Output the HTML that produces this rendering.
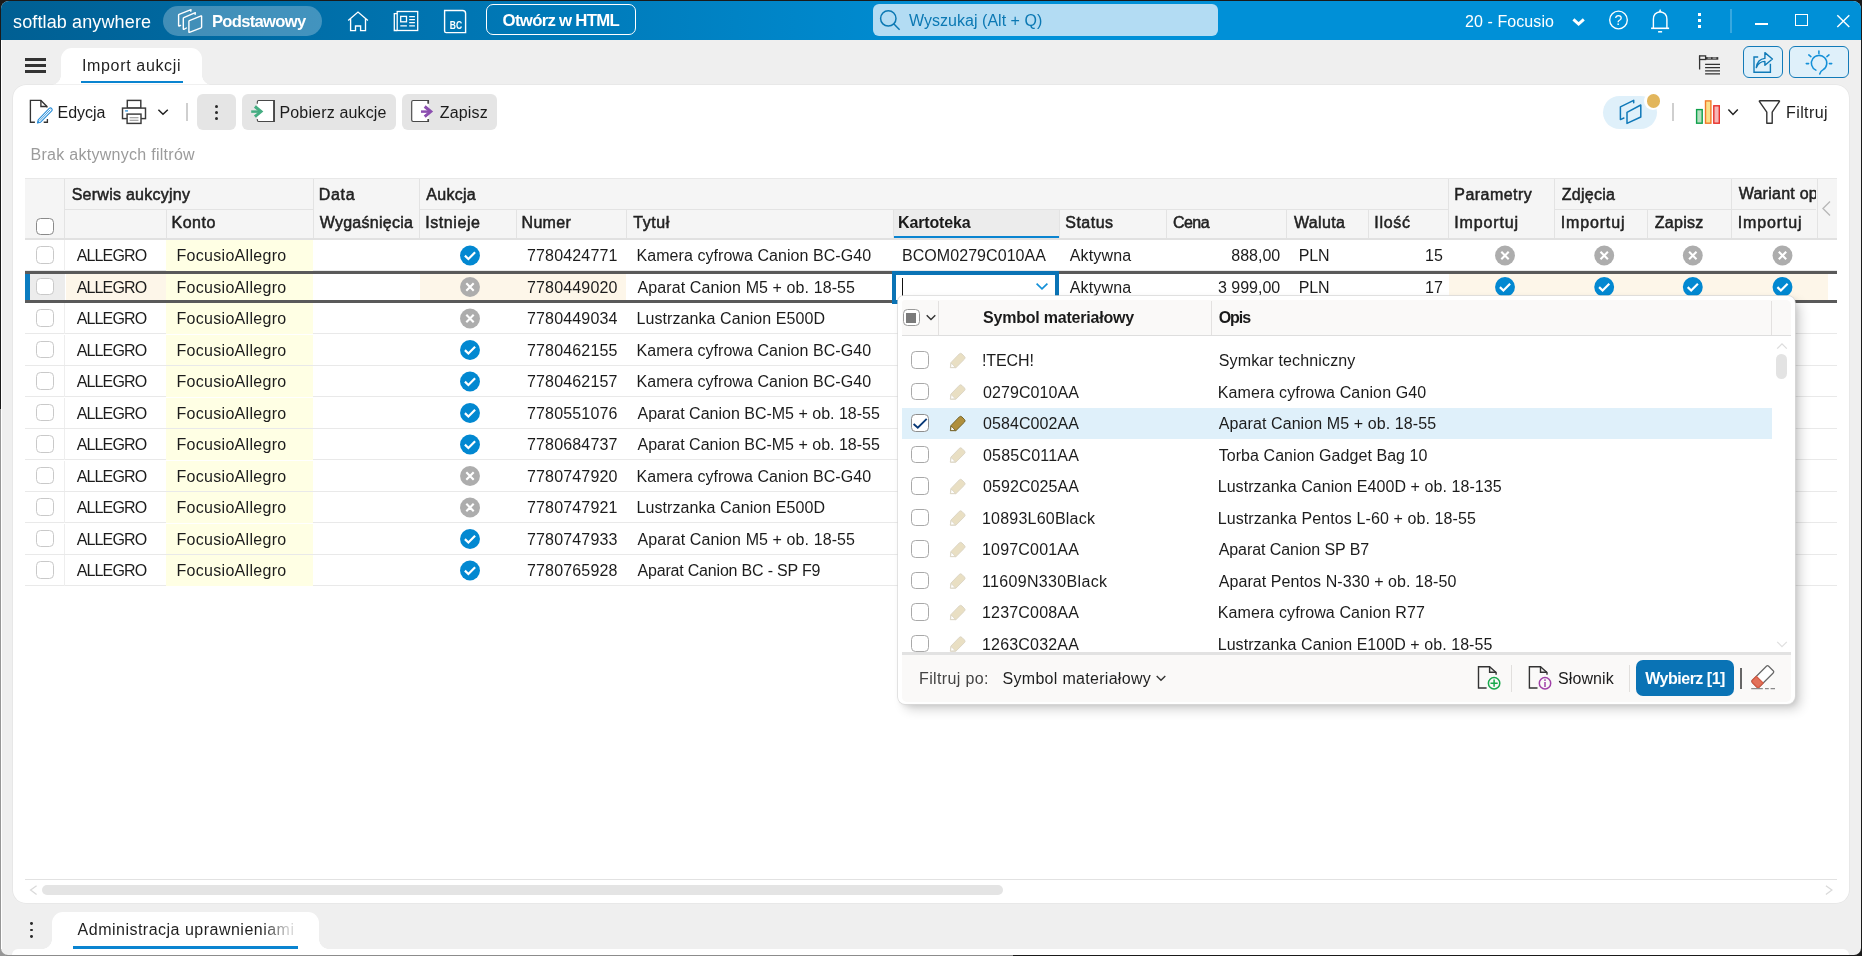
<!DOCTYPE html>
<html lang="pl"><head><meta charset="utf-8"><title>Import aukcji</title>
<style>
html,body{margin:0;padding:0;}
body{width:1862px;height:956px;overflow:hidden;background:linear-gradient(#969696,#969696) 0 409px/6px 560px no-repeat,linear-gradient(#8c8c8c,#8c8c8c) 0 944px/1013px 20px no-repeat,#1a1a1a;font-family:'Liberation Sans', sans-serif;position:relative;}
#win{position:absolute;left:0;top:0;width:1862px;height:956px;overflow:hidden;will-change:transform;}
#win div,#win span.t,#win svg{position:absolute;}
#win div{box-sizing:border-box;}
span.t{white-space:nowrap;line-height:20px;}
</style></head>
<body>
<div id="win">
<div style="left:1px;top:1px;width:1859.5px;height:954px;background:#efefef;border-radius:8px 8px 7px 7px;"></div>
<div style="left:1px;top:1px;width:1859.5px;height:39px;border-radius:8px 8px 0 0;background:linear-gradient(90deg,#005f93 0px,#0090d7 1000px,#0090d7 100%);"></div>
<span id="t1" class="t" style="left:13.00px;top:11.76px;font-size:18px;font-weight:400;color:#fff;letter-spacing:0.13px;">softlab anywhere</span>
<div style="left:163px;top:6px;width:159px;height:29.5px;border-radius:15px;background:rgba(255,255,255,0.26);"></div>
<span id="t2" class="t" style="left:212.00px;top:12.15px;font-size:16.6px;font-weight:700;color:#fff;letter-spacing:-0.70px;">Podstawowy</span>
<div style="left:485.8px;top:4.3px;width:149.8px;height:30.8px;border:1.8px solid #fff;border-radius:7px;"></div>
<span id="t3" class="t" style="left:502.60px;top:10.78px;font-size:16.8px;font-weight:700;color:#fff;letter-spacing:-0.72px;">Otwórz w HTML</span>
<div style="left:873px;top:4px;width:345px;height:31.5px;border-radius:6px;background:#b3dcf3;"></div>
<span id="t4" class="t" style="left:909.00px;top:11.26px;font-size:16px;font-weight:400;color:#0b78b3;letter-spacing:0.03px;">Wyszukaj (Alt + Q)</span>
<span id="t5" class="t" style="left:1465.00px;top:12.46px;font-size:16px;font-weight:400;color:#fff;letter-spacing:0.08px;">20 - Focusio</span>
<div style="left:1729.5px;top:8.8px;width:2px;height:24px;background:rgba(255,255,255,0.22);"></div>
<div style="left:61px;top:47.5px;width:141px;height:40px;background:#fff;border-radius:11px 11px 0 0;"></div>
<div style="left:51px;top:75px;width:10px;height:10px;background:radial-gradient(circle at 0 0,rgba(255,255,255,0) 9.6px,#fff 10.2px);"></div>
<div style="left:202px;top:75px;width:10px;height:10px;background:radial-gradient(circle at 100% 0,rgba(255,255,255,0) 9.6px,#fff 10.2px);"></div>
<span id="t6" class="t" style="left:82.00px;top:56.46px;font-size:16px;font-weight:400;color:#1f1f1f;letter-spacing:0.65px;">Import aukcji</span>
<div style="left:80.7px;top:80.7px;width:102px;height:2.8px;background:#0a84d0;"></div>
<div style="left:25px;top:58.3px;width:21px;height:2.5px;background:#333;"></div>
<div style="left:25px;top:64.2px;width:21px;height:2.5px;background:#333;"></div>
<div style="left:25px;top:70.1px;width:21px;height:2.5px;background:#333;"></div>
<div style="left:1742.7px;top:46.2px;width:40px;height:32.3px;border:1.7px solid #127ab8;border-radius:6px;background:#dff0fa;"></div>
<div style="left:1789.2px;top:46.2px;width:59.8px;height:32.3px;border:1.7px solid #127ab8;border-radius:6px;background:#dff0fa;"></div>
<div style="left:13px;top:85px;width:1836px;height:818px;background:#fff;border-radius:13px;box-shadow:0 0 0 0.6px #e2e2e2;"></div>
<span id="t7" class="t" style="left:57.50px;top:103.06px;font-size:16px;font-weight:400;color:#1c1c1c;letter-spacing:-0.03px;">Edycja</span>
<div style="left:186.4px;top:103px;width:1.5px;height:18px;background:#cfcfcf;"></div>
<div style="left:197px;top:94.2px;width:38.7px;height:36px;background:#e5e5e5;border-radius:6px;"></div>
<div style="left:214.6px;top:105px;width:3px;height:3px;background:#2a2a2a;border-radius:50%;"></div>
<div style="left:214.6px;top:110.9px;width:3px;height:3px;background:#2a2a2a;border-radius:50%;"></div>
<div style="left:214.6px;top:116.8px;width:3px;height:3px;background:#2a2a2a;border-radius:50%;"></div>
<div style="left:242px;top:94.2px;width:154px;height:36px;background:#e5e5e5;border-radius:6px;"></div>
<span id="t8" class="t" style="left:279.50px;top:103.06px;font-size:16px;font-weight:400;color:#1c1c1c;letter-spacing:0.15px;">Pobierz aukcje</span>
<div style="left:402px;top:94.2px;width:95px;height:36px;background:#e5e5e5;border-radius:6px;"></div>
<span id="t9" class="t" style="left:439.70px;top:103.06px;font-size:16px;font-weight:400;color:#1c1c1c;letter-spacing:0.17px;">Zapisz</span>
<div style="left:1603px;top:96px;width:54px;height:32.7px;background:#dff0fa;border-radius:17px;"></div>
<div style="left:1644.4px;top:92px;width:18px;height:18px;background:#fff;border-radius:50%;"></div>
<div style="left:1646.6px;top:94.2px;width:13.6px;height:13.6px;background:#e2b65c;border-radius:50%;"></div>
<div style="left:1672.3px;top:103.2px;width:1.5px;height:17.8px;background:#cfcfcf;"></div>
<span id="t10" class="t" style="left:1786.00px;top:103.06px;font-size:16px;font-weight:400;color:#1c1c1c;letter-spacing:0.41px;">Filtruj</span>
<span id="t11" class="t" style="left:30.50px;top:145.26px;font-size:16px;font-weight:400;color:#9b9b9b;letter-spacing:0.28px;">Brak aktywnych filtrów</span>
<div style="left:25px;top:178px;width:1812px;height:62px;background:#f5f5f5;border-top:1px solid #e8e8e8;border-bottom:2px solid #e1e1e1;"></div>
<div style="left:893.3px;top:210px;width:166px;height:28.4px;background:#ececec;"></div>
<div style="left:893.3px;top:235.8px;width:166px;height:2.6px;background:#0a84d0;"></div>
<div style="left:64.3px;top:179px;width:1px;height:59px;background:#e3e3e3;"></div>
<div style="left:312.6px;top:179px;width:1px;height:59px;background:#e3e3e3;"></div>
<div style="left:419.4px;top:179px;width:1px;height:59px;background:#e3e3e3;"></div>
<div style="left:1448.3px;top:179px;width:1px;height:59px;background:#e3e3e3;"></div>
<div style="left:1554.4px;top:179px;width:1px;height:59px;background:#e3e3e3;"></div>
<div style="left:1731.3px;top:179px;width:1px;height:59px;background:#e3e3e3;"></div>
<div style="left:1816.5px;top:179px;width:1px;height:59px;background:#e3e3e3;"></div>
<div style="left:165.5px;top:209.5px;width:1px;height:28.5px;background:#e3e3e3;"></div>
<div style="left:515.6px;top:209.5px;width:1px;height:28.5px;background:#e3e3e3;"></div>
<div style="left:626px;top:209.5px;width:1px;height:28.5px;background:#e3e3e3;"></div>
<div style="left:892.8px;top:209.5px;width:1px;height:28.5px;background:#e3e3e3;"></div>
<div style="left:1059.2px;top:209.5px;width:1px;height:28.5px;background:#e3e3e3;"></div>
<div style="left:1166.4px;top:209.5px;width:1px;height:28.5px;background:#e3e3e3;"></div>
<div style="left:1286.4px;top:209.5px;width:1px;height:28.5px;background:#e3e3e3;"></div>
<div style="left:1367.8px;top:209.5px;width:1px;height:28.5px;background:#e3e3e3;"></div>
<div style="left:1647.3px;top:209.5px;width:1px;height:28.5px;background:#e3e3e3;"></div>
<div style="left:64.3px;top:208.8px;width:248.3px;height:1px;background:#e3e3e3;"></div>
<div style="left:419.4px;top:208.8px;width:1028.9px;height:1px;background:#e3e3e3;"></div>
<div style="left:1554.4px;top:208.8px;width:262.0999999999999px;height:1px;background:#e3e3e3;"></div>
<span id="t12" class="t" style="left:71.70px;top:185.46px;font-size:16px;font-weight:400;color:#222;-webkit-text-stroke:0.5px #222;letter-spacing:0.26px;">Serwis aukcyjny</span>
<span id="t13" class="t" style="left:171.50px;top:213.46px;font-size:16px;font-weight:400;color:#222;-webkit-text-stroke:0.5px #222;letter-spacing:0.52px;">Konto</span>
<span id="t14" class="t" style="left:318.70px;top:185.46px;font-size:16px;font-weight:400;color:#222;-webkit-text-stroke:0.5px #222;letter-spacing:0.70px;">Data</span>
<span id="t15" class="t" style="left:319.70px;top:213.46px;font-size:16px;font-weight:400;color:#222;-webkit-text-stroke:0.5px #222;letter-spacing:0.26px;">Wygaśnięcia</span>
<span id="t16" class="t" style="left:426.30px;top:185.46px;font-size:16px;font-weight:400;color:#222;-webkit-text-stroke:0.5px #222;letter-spacing:0.28px;">Aukcja</span>
<span id="t17" class="t" style="left:425.30px;top:213.46px;font-size:16px;font-weight:400;color:#222;-webkit-text-stroke:0.5px #222;letter-spacing:0.56px;">Istnieje</span>
<span id="t18" class="t" style="left:521.50px;top:213.46px;font-size:16px;font-weight:400;color:#222;-webkit-text-stroke:0.5px #222;letter-spacing:0.33px;">Numer</span>
<span id="t19" class="t" style="left:633.30px;top:213.46px;font-size:16px;font-weight:400;color:#222;-webkit-text-stroke:0.5px #222;letter-spacing:0.54px;">Tytuł</span>
<span id="t20" class="t" style="left:898.00px;top:213.46px;font-size:16px;font-weight:700;color:#1a1a1a;letter-spacing:-0.14px;">Kartoteka</span>
<span id="t21" class="t" style="left:1065.30px;top:213.46px;font-size:16px;font-weight:400;color:#222;-webkit-text-stroke:0.5px #222;letter-spacing:0.47px;">Status</span>
<span id="t22" class="t" style="left:1173.00px;top:213.46px;font-size:16px;font-weight:400;color:#222;-webkit-text-stroke:0.5px #222;letter-spacing:-0.55px;">Cena</span>
<span id="t23" class="t" style="left:1294.00px;top:213.46px;font-size:16px;font-weight:400;color:#222;-webkit-text-stroke:0.5px #222;letter-spacing:0.34px;">Waluta</span>
<span id="t24" class="t" style="left:1374.30px;top:213.46px;font-size:16px;font-weight:400;color:#222;-webkit-text-stroke:0.5px #222;letter-spacing:0.70px;">Ilość</span>
<span id="t25" class="t" style="left:1454.30px;top:185.46px;font-size:16px;font-weight:400;color:#222;-webkit-text-stroke:0.5px #222;letter-spacing:0.45px;">Parametry</span>
<span id="t26" class="t" style="left:1454.30px;top:213.46px;font-size:16px;font-weight:400;color:#222;-webkit-text-stroke:0.5px #222;letter-spacing:0.85px;">Importuj</span>
<span id="t27" class="t" style="left:1561.70px;top:185.46px;font-size:16px;font-weight:400;color:#222;-webkit-text-stroke:0.5px #222;letter-spacing:0.27px;">Zdjęcia</span>
<span id="t28" class="t" style="left:1560.70px;top:213.46px;font-size:16px;font-weight:400;color:#222;-webkit-text-stroke:0.5px #222;letter-spacing:0.85px;">Importuj</span>
<span id="t29" class="t" style="left:1654.70px;top:213.46px;font-size:16px;font-weight:400;color:#222;-webkit-text-stroke:0.5px #222;letter-spacing:0.30px;">Zapisz</span>
<div style="left:1732.3px;top:180px;width:84px;height:28px;overflow:hidden;"><span class="t" style="left:6.4px;top:4.46px;font-size:16px;color:#222;-webkit-text-stroke:0.5px #222;letter-spacing:0.25px;">Wariant opisu</span></div>
<span id="t30" class="t" style="left:1737.70px;top:213.46px;font-size:16px;font-weight:400;color:#222;-webkit-text-stroke:0.5px #222;letter-spacing:0.85px;">Importuj</span>
<div style="left:36.3px;top:217.5px;width:17.5px;height:17.5px;border:1.5px solid #8a8a8a;border-radius:4.5px;background:#fff;"></div>
<div style="left:25px;top:270.1px;width:1812px;height:1px;background:#e9e9e9;"></div>
<div style="left:64.3px;top:240.0px;width:1px;height:30.5px;background:#eeeeee;"></div>
<div style="left:166px;top:240.0px;width:147px;height:30.5px;background:#ffffe4;"></div>
<div style="left:36.3px;top:246.3px;width:17.5px;height:17.5px;border:1.5px solid #c9c9c9;border-radius:4.5px;background:#fff;"></div>
<span id="t31" class="t" style="left:76.70px;top:246.36px;font-size:16px;font-weight:400;color:#1c1c1c;letter-spacing:-0.86px;">ALLEGRO</span>
<span id="t32" class="t" style="left:176.50px;top:246.36px;font-size:16px;font-weight:400;color:#1c1c1c;letter-spacing:0.30px;">FocusioAllegro</span>
<svg style="left:460px;top:245px;" width="20" height="21" viewBox="0 0 20 21"><g transform="translate(0.0 0.5)"><circle cx="10" cy="10" r="9.95" fill="#0288d1"/><path d="M4.9 10.1 L8.4 13.5 L15.1 6.8" fill="none" stroke="#fff" stroke-width="2.2"/></g></svg>
<span id="t33" class="t" style="left:527.00px;top:246.36px;font-size:16px;font-weight:400;color:#1c1c1c;letter-spacing:0.16px;">7780424771</span>
<span id="t34" class="t" style="left:636.50px;top:246.36px;font-size:16px;font-weight:400;color:#1c1c1c;letter-spacing:0.06px;">Kamera cyfrowa Canion BC-G40</span>
<span id="t35" class="t" style="left:1069.70px;top:246.36px;font-size:16px;font-weight:400;color:#1c1c1c;letter-spacing:0.17px;">Aktywna</span>
<span id="t36" class="t" style="right:581.80px;top:246.36px;font-size:16px;font-weight:400;color:#1c1c1c;">888,00</span>
<span id="t37" class="t" style="left:1298.70px;top:246.36px;font-size:16px;font-weight:400;color:#1c1c1c;letter-spacing:-0.14px;">PLN</span>
<span id="t38" class="t" style="right:419.10px;top:246.36px;font-size:16px;font-weight:400;color:#1c1c1c;">15</span>
<svg style="left:1495px;top:245px;" width="20" height="21" viewBox="0 0 20 21"><g transform="translate(0.0 0.5)"><circle cx="10" cy="10" r="9.95" fill="#adadad"/><path d="M6.3 6.3 L13.7 13.7 M13.7 6.3 L6.3 13.7" fill="none" stroke="#fff" stroke-width="2.1"/></g></svg>
<svg style="left:1594px;top:245px;" width="21" height="21" viewBox="0 0 21 21"><g transform="translate(0.2 0.5)"><circle cx="10" cy="10" r="9.95" fill="#adadad"/><path d="M6.3 6.3 L13.7 13.7 M13.7 6.3 L6.3 13.7" fill="none" stroke="#fff" stroke-width="2.1"/></g></svg>
<svg style="left:1682px;top:245px;" width="21" height="21" viewBox="0 0 21 21"><g transform="translate(0.8 0.5)"><circle cx="10" cy="10" r="9.95" fill="#adadad"/><path d="M6.3 6.3 L13.7 13.7 M13.7 6.3 L6.3 13.7" fill="none" stroke="#fff" stroke-width="2.1"/></g></svg>
<svg style="left:1772px;top:245px;" width="21" height="21" viewBox="0 0 21 21"><g transform="translate(0.5 0.5)"><circle cx="10" cy="10" r="9.95" fill="#adadad"/><path d="M6.3 6.3 L13.7 13.7 M13.7 6.3 L6.3 13.7" fill="none" stroke="#fff" stroke-width="2.1"/></g></svg>
<div style="left:25px;top:301.6px;width:1812px;height:1px;background:#e9e9e9;"></div>
<div style="left:25px;top:271px;width:1812px;height:32px;background:#fff;"></div>
<div style="left:25px;top:274px;width:4.6px;height:26px;background:#0b7cc0;"></div>
<div style="left:29.6px;top:274px;width:35px;height:26px;background:#ececec;"></div>
<div style="left:65.5px;top:274px;width:100.5px;height:26px;background:#fdf6e9;"></div>
<div style="left:419.8px;top:274px;width:206.5px;height:26px;background:#fdf6e9;"></div>
<div style="left:1449px;top:274px;width:379.3px;height:26px;background:#fdf6e9;"></div>
<div style="left:166px;top:274px;width:147px;height:26px;background:#ffffe4;"></div>
<div style="left:36.3px;top:277.8px;width:17.5px;height:17.5px;border:1.5px solid #c9c9c9;border-radius:4.5px;background:#fff;"></div>
<span id="t39" class="t" style="left:76.70px;top:277.86px;font-size:16px;font-weight:400;color:#1c1c1c;letter-spacing:-0.86px;">ALLEGRO</span>
<span id="t40" class="t" style="left:176.50px;top:277.86px;font-size:16px;font-weight:400;color:#1c1c1c;letter-spacing:0.30px;">FocusioAllegro</span>
<svg style="left:460px;top:277px;" width="20" height="20" viewBox="0 0 20 20"><circle cx="10" cy="10" r="9.95" fill="#adadad"/><path d="M6.3 6.3 L13.7 13.7 M13.7 6.3 L6.3 13.7" fill="none" stroke="#fff" stroke-width="2.1"/></svg>
<span id="t41" class="t" style="left:527.00px;top:277.86px;font-size:16px;font-weight:400;color:#1c1c1c;letter-spacing:0.16px;">7780449020</span>
<span id="t42" class="t" style="left:637.50px;top:277.86px;font-size:16px;font-weight:400;color:#1c1c1c;letter-spacing:0.10px;">Aparat Canion M5 + ob. 18-55</span>
<span id="t43" class="t" style="left:1069.70px;top:277.86px;font-size:16px;font-weight:400;color:#1c1c1c;letter-spacing:0.17px;">Aktywna</span>
<span id="t44" class="t" style="right:581.80px;top:277.86px;font-size:16px;font-weight:400;color:#1c1c1c;">3 999,00</span>
<span id="t45" class="t" style="left:1298.70px;top:277.86px;font-size:16px;font-weight:400;color:#1c1c1c;letter-spacing:-0.14px;">PLN</span>
<span id="t46" class="t" style="right:419.10px;top:277.86px;font-size:16px;font-weight:400;color:#1c1c1c;">17</span>
<svg style="left:1495px;top:277px;" width="20" height="20" viewBox="0 0 20 20"><circle cx="10" cy="10" r="9.95" fill="#0288d1"/><path d="M4.9 10.1 L8.4 13.5 L15.1 6.8" fill="none" stroke="#fff" stroke-width="2.2"/></svg>
<svg style="left:1594px;top:277px;" width="21" height="20" viewBox="0 0 21 20"><g transform="translate(0.2 0.0)"><circle cx="10" cy="10" r="9.95" fill="#0288d1"/><path d="M4.9 10.1 L8.4 13.5 L15.1 6.8" fill="none" stroke="#fff" stroke-width="2.2"/></g></svg>
<svg style="left:1682px;top:277px;" width="21" height="20" viewBox="0 0 21 20"><g transform="translate(0.8 0.0)"><circle cx="10" cy="10" r="9.95" fill="#0288d1"/><path d="M4.9 10.1 L8.4 13.5 L15.1 6.8" fill="none" stroke="#fff" stroke-width="2.2"/></g></svg>
<svg style="left:1772px;top:277px;" width="21" height="20" viewBox="0 0 21 20"><g transform="translate(0.5 0.0)"><circle cx="10" cy="10" r="9.95" fill="#0288d1"/><path d="M4.9 10.1 L8.4 13.5 L15.1 6.8" fill="none" stroke="#fff" stroke-width="2.2"/></g></svg>
<div style="left:25px;top:333.1px;width:1812px;height:1px;background:#e9e9e9;"></div>
<div style="left:64.3px;top:303.0px;width:1px;height:30.5px;background:#eeeeee;"></div>
<div style="left:166px;top:303.0px;width:147px;height:30.5px;background:#ffffe4;"></div>
<div style="left:36.3px;top:309.3px;width:17.5px;height:17.5px;border:1.5px solid #c9c9c9;border-radius:4.5px;background:#fff;"></div>
<span id="t47" class="t" style="left:76.70px;top:309.36px;font-size:16px;font-weight:400;color:#1c1c1c;letter-spacing:-0.86px;">ALLEGRO</span>
<span id="t48" class="t" style="left:176.50px;top:309.36px;font-size:16px;font-weight:400;color:#1c1c1c;letter-spacing:0.30px;">FocusioAllegro</span>
<svg style="left:460px;top:308px;" width="20" height="21" viewBox="0 0 20 21"><g transform="translate(0.0 0.5)"><circle cx="10" cy="10" r="9.95" fill="#adadad"/><path d="M6.3 6.3 L13.7 13.7 M13.7 6.3 L6.3 13.7" fill="none" stroke="#fff" stroke-width="2.1"/></g></svg>
<span id="t49" class="t" style="left:527.00px;top:309.36px;font-size:16px;font-weight:400;color:#1c1c1c;letter-spacing:0.16px;">7780449034</span>
<span id="t50" class="t" style="left:636.50px;top:309.36px;font-size:16px;font-weight:400;color:#1c1c1c;letter-spacing:0.08px;">Lustrzanka Canion E500D</span>
<div style="left:25px;top:364.6px;width:1812px;height:1px;background:#e9e9e9;"></div>
<div style="left:64.3px;top:334.5px;width:1px;height:30.5px;background:#eeeeee;"></div>
<div style="left:166px;top:334.5px;width:147px;height:30.5px;background:#ffffe4;"></div>
<div style="left:36.3px;top:340.8px;width:17.5px;height:17.5px;border:1.5px solid #c9c9c9;border-radius:4.5px;background:#fff;"></div>
<span id="t51" class="t" style="left:76.70px;top:340.86px;font-size:16px;font-weight:400;color:#1c1c1c;letter-spacing:-0.86px;">ALLEGRO</span>
<span id="t52" class="t" style="left:176.50px;top:340.86px;font-size:16px;font-weight:400;color:#1c1c1c;letter-spacing:0.30px;">FocusioAllegro</span>
<svg style="left:460px;top:340px;" width="20" height="20" viewBox="0 0 20 20"><circle cx="10" cy="10" r="9.95" fill="#0288d1"/><path d="M4.9 10.1 L8.4 13.5 L15.1 6.8" fill="none" stroke="#fff" stroke-width="2.2"/></svg>
<span id="t53" class="t" style="left:527.00px;top:340.86px;font-size:16px;font-weight:400;color:#1c1c1c;letter-spacing:0.16px;">7780462155</span>
<span id="t54" class="t" style="left:636.50px;top:340.86px;font-size:16px;font-weight:400;color:#1c1c1c;letter-spacing:0.06px;">Kamera cyfrowa Canion BC-G40</span>
<div style="left:25px;top:396.1px;width:1812px;height:1px;background:#e9e9e9;"></div>
<div style="left:64.3px;top:366.0px;width:1px;height:30.5px;background:#eeeeee;"></div>
<div style="left:166px;top:366.0px;width:147px;height:30.5px;background:#ffffe4;"></div>
<div style="left:36.3px;top:372.3px;width:17.5px;height:17.5px;border:1.5px solid #c9c9c9;border-radius:4.5px;background:#fff;"></div>
<span id="t55" class="t" style="left:76.70px;top:372.36px;font-size:16px;font-weight:400;color:#1c1c1c;letter-spacing:-0.86px;">ALLEGRO</span>
<span id="t56" class="t" style="left:176.50px;top:372.36px;font-size:16px;font-weight:400;color:#1c1c1c;letter-spacing:0.30px;">FocusioAllegro</span>
<svg style="left:460px;top:371px;" width="20" height="21" viewBox="0 0 20 21"><g transform="translate(0.0 0.5)"><circle cx="10" cy="10" r="9.95" fill="#0288d1"/><path d="M4.9 10.1 L8.4 13.5 L15.1 6.8" fill="none" stroke="#fff" stroke-width="2.2"/></g></svg>
<span id="t57" class="t" style="left:527.00px;top:372.36px;font-size:16px;font-weight:400;color:#1c1c1c;letter-spacing:0.16px;">7780462157</span>
<span id="t58" class="t" style="left:636.50px;top:372.36px;font-size:16px;font-weight:400;color:#1c1c1c;letter-spacing:0.06px;">Kamera cyfrowa Canion BC-G40</span>
<div style="left:25px;top:427.6px;width:1812px;height:1px;background:#e9e9e9;"></div>
<div style="left:64.3px;top:397.5px;width:1px;height:30.5px;background:#eeeeee;"></div>
<div style="left:166px;top:397.5px;width:147px;height:30.5px;background:#ffffe4;"></div>
<div style="left:36.3px;top:403.8px;width:17.5px;height:17.5px;border:1.5px solid #c9c9c9;border-radius:4.5px;background:#fff;"></div>
<span id="t59" class="t" style="left:76.70px;top:403.86px;font-size:16px;font-weight:400;color:#1c1c1c;letter-spacing:-0.86px;">ALLEGRO</span>
<span id="t60" class="t" style="left:176.50px;top:403.86px;font-size:16px;font-weight:400;color:#1c1c1c;letter-spacing:0.30px;">FocusioAllegro</span>
<svg style="left:460px;top:403px;" width="20" height="20" viewBox="0 0 20 20"><circle cx="10" cy="10" r="9.95" fill="#0288d1"/><path d="M4.9 10.1 L8.4 13.5 L15.1 6.8" fill="none" stroke="#fff" stroke-width="2.2"/></svg>
<span id="t61" class="t" style="left:527.00px;top:403.86px;font-size:16px;font-weight:400;color:#1c1c1c;letter-spacing:0.16px;">7780551076</span>
<span id="t62" class="t" style="left:637.50px;top:403.86px;font-size:16px;font-weight:400;color:#1c1c1c;">Aparat Canion BC-M5 + ob. 18-55</span>
<div style="left:25px;top:459.1px;width:1812px;height:1px;background:#e9e9e9;"></div>
<div style="left:64.3px;top:429.0px;width:1px;height:30.5px;background:#eeeeee;"></div>
<div style="left:166px;top:429.0px;width:147px;height:30.5px;background:#ffffe4;"></div>
<div style="left:36.3px;top:435.3px;width:17.5px;height:17.5px;border:1.5px solid #c9c9c9;border-radius:4.5px;background:#fff;"></div>
<span id="t63" class="t" style="left:76.70px;top:435.36px;font-size:16px;font-weight:400;color:#1c1c1c;letter-spacing:-0.86px;">ALLEGRO</span>
<span id="t64" class="t" style="left:176.50px;top:435.36px;font-size:16px;font-weight:400;color:#1c1c1c;letter-spacing:0.30px;">FocusioAllegro</span>
<svg style="left:460px;top:434px;" width="20" height="21" viewBox="0 0 20 21"><g transform="translate(0.0 0.5)"><circle cx="10" cy="10" r="9.95" fill="#0288d1"/><path d="M4.9 10.1 L8.4 13.5 L15.1 6.8" fill="none" stroke="#fff" stroke-width="2.2"/></g></svg>
<span id="t65" class="t" style="left:527.00px;top:435.36px;font-size:16px;font-weight:400;color:#1c1c1c;letter-spacing:0.16px;">7780684737</span>
<span id="t66" class="t" style="left:637.50px;top:435.36px;font-size:16px;font-weight:400;color:#1c1c1c;">Aparat Canion BC-M5 + ob. 18-55</span>
<div style="left:25px;top:490.6px;width:1812px;height:1px;background:#e9e9e9;"></div>
<div style="left:64.3px;top:460.5px;width:1px;height:30.5px;background:#eeeeee;"></div>
<div style="left:166px;top:460.5px;width:147px;height:30.5px;background:#ffffe4;"></div>
<div style="left:36.3px;top:466.8px;width:17.5px;height:17.5px;border:1.5px solid #c9c9c9;border-radius:4.5px;background:#fff;"></div>
<span id="t67" class="t" style="left:76.70px;top:466.86px;font-size:16px;font-weight:400;color:#1c1c1c;letter-spacing:-0.86px;">ALLEGRO</span>
<span id="t68" class="t" style="left:176.50px;top:466.86px;font-size:16px;font-weight:400;color:#1c1c1c;letter-spacing:0.30px;">FocusioAllegro</span>
<svg style="left:460px;top:466px;" width="20" height="20" viewBox="0 0 20 20"><circle cx="10" cy="10" r="9.95" fill="#adadad"/><path d="M6.3 6.3 L13.7 13.7 M13.7 6.3 L6.3 13.7" fill="none" stroke="#fff" stroke-width="2.1"/></svg>
<span id="t69" class="t" style="left:527.00px;top:466.86px;font-size:16px;font-weight:400;color:#1c1c1c;letter-spacing:0.16px;">7780747920</span>
<span id="t70" class="t" style="left:636.50px;top:466.86px;font-size:16px;font-weight:400;color:#1c1c1c;letter-spacing:0.06px;">Kamera cyfrowa Canion BC-G40</span>
<div style="left:25px;top:522.1px;width:1812px;height:1px;background:#e9e9e9;"></div>
<div style="left:64.3px;top:492.0px;width:1px;height:30.5px;background:#eeeeee;"></div>
<div style="left:166px;top:492.0px;width:147px;height:30.5px;background:#ffffe4;"></div>
<div style="left:36.3px;top:498.3px;width:17.5px;height:17.5px;border:1.5px solid #c9c9c9;border-radius:4.5px;background:#fff;"></div>
<span id="t71" class="t" style="left:76.70px;top:498.36px;font-size:16px;font-weight:400;color:#1c1c1c;letter-spacing:-0.86px;">ALLEGRO</span>
<span id="t72" class="t" style="left:176.50px;top:498.36px;font-size:16px;font-weight:400;color:#1c1c1c;letter-spacing:0.30px;">FocusioAllegro</span>
<svg style="left:460px;top:497px;" width="20" height="21" viewBox="0 0 20 21"><g transform="translate(0.0 0.5)"><circle cx="10" cy="10" r="9.95" fill="#adadad"/><path d="M6.3 6.3 L13.7 13.7 M13.7 6.3 L6.3 13.7" fill="none" stroke="#fff" stroke-width="2.1"/></g></svg>
<span id="t73" class="t" style="left:527.00px;top:498.36px;font-size:16px;font-weight:400;color:#1c1c1c;letter-spacing:0.16px;">7780747921</span>
<span id="t74" class="t" style="left:636.50px;top:498.36px;font-size:16px;font-weight:400;color:#1c1c1c;letter-spacing:0.08px;">Lustrzanka Canion E500D</span>
<div style="left:25px;top:553.6px;width:1812px;height:1px;background:#e9e9e9;"></div>
<div style="left:64.3px;top:523.5px;width:1px;height:30.5px;background:#eeeeee;"></div>
<div style="left:166px;top:523.5px;width:147px;height:30.5px;background:#ffffe4;"></div>
<div style="left:36.3px;top:529.8px;width:17.5px;height:17.5px;border:1.5px solid #c9c9c9;border-radius:4.5px;background:#fff;"></div>
<span id="t75" class="t" style="left:76.70px;top:529.86px;font-size:16px;font-weight:400;color:#1c1c1c;letter-spacing:-0.86px;">ALLEGRO</span>
<span id="t76" class="t" style="left:176.50px;top:529.86px;font-size:16px;font-weight:400;color:#1c1c1c;letter-spacing:0.30px;">FocusioAllegro</span>
<svg style="left:460px;top:529px;" width="20" height="20" viewBox="0 0 20 20"><circle cx="10" cy="10" r="9.95" fill="#0288d1"/><path d="M4.9 10.1 L8.4 13.5 L15.1 6.8" fill="none" stroke="#fff" stroke-width="2.2"/></svg>
<span id="t77" class="t" style="left:527.00px;top:529.86px;font-size:16px;font-weight:400;color:#1c1c1c;letter-spacing:0.16px;">7780747933</span>
<span id="t78" class="t" style="left:637.50px;top:529.86px;font-size:16px;font-weight:400;color:#1c1c1c;letter-spacing:0.10px;">Aparat Canion M5 + ob. 18-55</span>
<div style="left:25px;top:585.1px;width:1812px;height:1px;background:#e9e9e9;"></div>
<div style="left:64.3px;top:555.0px;width:1px;height:30.5px;background:#eeeeee;"></div>
<div style="left:166px;top:555.0px;width:147px;height:30.5px;background:#ffffe4;"></div>
<div style="left:36.3px;top:561.3px;width:17.5px;height:17.5px;border:1.5px solid #c9c9c9;border-radius:4.5px;background:#fff;"></div>
<span id="t79" class="t" style="left:76.70px;top:561.36px;font-size:16px;font-weight:400;color:#1c1c1c;letter-spacing:-0.86px;">ALLEGRO</span>
<span id="t80" class="t" style="left:176.50px;top:561.36px;font-size:16px;font-weight:400;color:#1c1c1c;letter-spacing:0.30px;">FocusioAllegro</span>
<svg style="left:460px;top:560px;" width="20" height="21" viewBox="0 0 20 21"><g transform="translate(0.0 0.5)"><circle cx="10" cy="10" r="9.95" fill="#0288d1"/><path d="M4.9 10.1 L8.4 13.5 L15.1 6.8" fill="none" stroke="#fff" stroke-width="2.2"/></g></svg>
<span id="t81" class="t" style="left:527.00px;top:561.36px;font-size:16px;font-weight:400;color:#1c1c1c;letter-spacing:0.16px;">7780765928</span>
<span id="t82" class="t" style="left:637.50px;top:561.36px;font-size:16px;font-weight:400;color:#1c1c1c;letter-spacing:-0.19px;">Aparat Canion BC - SP F9</span>
<span id="t83" class="t" style="left:902.00px;top:246.36px;font-size:16px;font-weight:400;color:#1c1c1c;letter-spacing:0.06px;">BCOM0279C010AA</span>
<div style="left:25px;top:271px;width:1812px;height:3px;background:#5a5a5a;"></div>
<div style="left:25px;top:300px;width:1812px;height:3px;background:#5a5a5a;"></div>
<div style="left:892px;top:271px;width:167.3px;height:33px;border:4.6px solid #0a73b5;background:#fff;"></div>
<div style="left:902.3px;top:278px;width:1.2px;height:19px;background:#111;"></div>
<svg style="left:1035px;top:281px;" width="14" height="10" viewBox="0 0 14 10"><path d="M1.6 2.6 L7 7.9 L12.4 2.6" fill="none" stroke="#1490d8" stroke-width="1.7"/></svg>
<svg style="left:1821px;top:200px;" width="11" height="17" viewBox="0 0 11 17"><path d="M9 1.6 L2 8.5 L9 15.4" fill="none" stroke="#b9b9b9" stroke-width="1.4"/></svg>
<div style="left:25px;top:878.6px;width:1812px;height:1.2px;background:#e2e2e2;"></div>
<div style="left:42px;top:885.4px;width:961px;height:9.8px;background:#e4e4e4;border-radius:5px;"></div>
<svg style="left:29px;top:884px;" width="9" height="12" viewBox="0 0 9 12"><g transform="translate(0.0 0.5)"><path d="M7.6 1.2 L1.6 5.6 L7.6 10" fill="none" stroke="#dadada" stroke-width="1.3"/></g></svg>
<svg style="left:1824px;top:884px;" width="10" height="12" viewBox="0 0 10 12"><g transform="translate(0.5 0.5)"><path d="M1.4 1.2 L7.4 5.6 L1.4 10" fill="none" stroke="#dadada" stroke-width="1.3"/></g></svg>
<div style="left:897.5px;top:296px;width:897.2px;height:408px;background:#fff;border-radius:5px 7px 8px 7px;box-shadow:0 0 0 0.7px #d9d9d9, 6px 6px 12px -1px rgba(0,0,0,0.19), 2px 2px 5px rgba(0,0,0,0.08);"></div>
<div style="left:902px;top:299.7px;width:889.3px;height:36.3px;background:#faf9f8;border-bottom:1.2px solid #dedede;border-radius:3px 5px 0 0;"></div>
<div style="left:938px;top:300.5px;width:1px;height:34.5px;background:#e3e1e0;"></div>
<div style="left:1211px;top:300.5px;width:1px;height:34.5px;background:#e3e1e0;"></div>
<div style="left:1770.5px;top:300.5px;width:1px;height:34.5px;background:#e3e1e0;"></div>
<div style="left:902.5px;top:309.2px;width:17.3px;height:17.3px;border:1.4px solid #9a9a9a;border-radius:4.5px;background:#fff;"></div>
<div style="left:906.4px;top:313.1px;width:9.5px;height:9.5px;background:#7b7b7b;"></div>
<svg style="left:925px;top:313px;" width="12" height="9" viewBox="0 0 12 9"><g transform="translate(0.5 0.5)"><path d="M1.2 1.8 L5.5 6 L9.8 1.8" fill="none" stroke="#333" stroke-width="1.4"/></g></svg>
<span id="t84" class="t" style="left:983.00px;top:307.96px;font-size:16px;font-weight:700;color:#1a1a1a;letter-spacing:-0.21px;">Symbol materiałowy</span>
<span id="t85" class="t" style="left:1218.70px;top:307.96px;font-size:16px;font-weight:700;color:#1a1a1a;letter-spacing:-1.02px;">Opis</span>
<div style="left:902px;top:337px;width:889.3px;height:315px;overflow:hidden;">
<div style="left:9.3px;top:14.40px;width:17.5px;height:17.5px;border:1.4px solid #a9a9a9;border-radius:4.5px;background:#fff;"></div>
<svg style="left:47px;top:15px;" width="18" height="18" viewBox="0 0 18 18"><g transform="translate(0.3 0.1)"><path d="M1 15.6 L1.7 10.4 L10 1.8 Q11.3 0.6 12.6 1.8 L15.2 4.4 Q16.4 5.7 15.2 7 L6.6 15.6 Z" fill="#e9dfc3" stroke="#d9d3c2" stroke-width="0.9" stroke-linejoin="round"/><path d="M1.2 15.4 L1.9 10.9 L6 15.2 Z" fill="#fff" stroke="#d9d3c2" stroke-width="0.8" stroke-linejoin="round"/></g></svg>
<span id="t86" class="t" style="left:80.00px;top:14.26px;font-size:16px;font-weight:400;color:#1c1c1c;letter-spacing:-0.10px;">!TECH!</span>
<span id="t87" class="t" style="left:316.70px;top:14.26px;font-size:16px;font-weight:400;color:#1c1c1c;letter-spacing:0.15px;">Symkar techniczny</span>
<div style="left:9.3px;top:45.90px;width:17.5px;height:17.5px;border:1.4px solid #a9a9a9;border-radius:4.5px;background:#fff;"></div>
<svg style="left:47px;top:46px;" width="18" height="18" viewBox="0 0 18 18"><g transform="translate(0.3 0.6)"><path d="M1 15.6 L1.7 10.4 L10 1.8 Q11.3 0.6 12.6 1.8 L15.2 4.4 Q16.4 5.7 15.2 7 L6.6 15.6 Z" fill="#e9dfc3" stroke="#d9d3c2" stroke-width="0.9" stroke-linejoin="round"/><path d="M1.2 15.4 L1.9 10.9 L6 15.2 Z" fill="#fff" stroke="#d9d3c2" stroke-width="0.8" stroke-linejoin="round"/></g></svg>
<span id="t88" class="t" style="left:81.00px;top:45.76px;font-size:16px;font-weight:400;color:#1c1c1c;letter-spacing:0.08px;">0279C010AA</span>
<span id="t89" class="t" style="left:315.70px;top:45.76px;font-size:16px;font-weight:400;color:#1c1c1c;letter-spacing:0.13px;">Kamera cyfrowa Canion G40</span>
<div style="left:0px;top:71.0px;width:869.7px;height:30.5px;background:#dff0fa;"></div>
<div style="left:9.3px;top:77.40px;width:17.5px;height:17.5px;border:1.4px solid #8d8d8d;border-radius:4.5px;background:#fff;"></div>
<svg style="left:9px;top:77px;" width="19" height="19" viewBox="0 0 19 19"><g transform="translate(0.3 0.4)"><path d="M2.3 9.6 L6.5 13.3 L15.4 4.5" fill="none" stroke="#0a3a78" stroke-width="1.9"/></g></svg>
<svg style="left:47px;top:78px;" width="18" height="18" viewBox="0 0 18 18"><g transform="translate(0.3 0.1)"><path d="M1 15.6 L1.7 10.4 L10 1.8 Q11.3 0.6 12.6 1.8 L15.2 4.4 Q16.4 5.7 15.2 7 L6.6 15.6 Z" fill="#b08f3c" stroke="#6b5a1e" stroke-width="0.9" stroke-linejoin="round"/><path d="M1.2 15.4 L1.9 10.9 L6 15.2 Z" fill="#fff" stroke="#6b5a1e" stroke-width="0.8" stroke-linejoin="round"/></g></svg>
<span id="t90" class="t" style="left:81.00px;top:77.26px;font-size:16px;font-weight:400;color:#1c1c1c;letter-spacing:0.08px;">0584C002AA</span>
<span id="t91" class="t" style="left:316.70px;top:77.26px;font-size:16px;font-weight:400;color:#1c1c1c;letter-spacing:0.10px;">Aparat Canion M5 + ob. 18-55</span>
<div style="left:9.3px;top:108.90px;width:17.5px;height:17.5px;border:1.4px solid #a9a9a9;border-radius:4.5px;background:#fff;"></div>
<svg style="left:47px;top:109px;" width="18" height="18" viewBox="0 0 18 18"><g transform="translate(0.3 0.6)"><path d="M1 15.6 L1.7 10.4 L10 1.8 Q11.3 0.6 12.6 1.8 L15.2 4.4 Q16.4 5.7 15.2 7 L6.6 15.6 Z" fill="#e9dfc3" stroke="#d9d3c2" stroke-width="0.9" stroke-linejoin="round"/><path d="M1.2 15.4 L1.9 10.9 L6 15.2 Z" fill="#fff" stroke="#d9d3c2" stroke-width="0.8" stroke-linejoin="round"/></g></svg>
<span id="t92" class="t" style="left:81.00px;top:108.76px;font-size:16px;font-weight:400;color:#1c1c1c;letter-spacing:0.21px;">0585C011AA</span>
<span id="t93" class="t" style="left:316.70px;top:108.76px;font-size:16px;font-weight:400;color:#1c1c1c;letter-spacing:0.06px;">Torba Canion Gadget Bag 10</span>
<div style="left:9.3px;top:140.40px;width:17.5px;height:17.5px;border:1.4px solid #a9a9a9;border-radius:4.5px;background:#fff;"></div>
<svg style="left:47px;top:141px;" width="18" height="18" viewBox="0 0 18 18"><g transform="translate(0.3 0.1)"><path d="M1 15.6 L1.7 10.4 L10 1.8 Q11.3 0.6 12.6 1.8 L15.2 4.4 Q16.4 5.7 15.2 7 L6.6 15.6 Z" fill="#e9dfc3" stroke="#d9d3c2" stroke-width="0.9" stroke-linejoin="round"/><path d="M1.2 15.4 L1.9 10.9 L6 15.2 Z" fill="#fff" stroke="#d9d3c2" stroke-width="0.8" stroke-linejoin="round"/></g></svg>
<span id="t94" class="t" style="left:81.00px;top:140.26px;font-size:16px;font-weight:400;color:#1c1c1c;letter-spacing:0.08px;">0592C025AA</span>
<span id="t95" class="t" style="left:315.70px;top:140.26px;font-size:16px;font-weight:400;color:#1c1c1c;letter-spacing:0.07px;">Lustrzanka Canion E400D + ob. 18-135</span>
<div style="left:9.3px;top:171.90px;width:17.5px;height:17.5px;border:1.4px solid #a9a9a9;border-radius:4.5px;background:#fff;"></div>
<svg style="left:47px;top:172px;" width="18" height="18" viewBox="0 0 18 18"><g transform="translate(0.3 0.6)"><path d="M1 15.6 L1.7 10.4 L10 1.8 Q11.3 0.6 12.6 1.8 L15.2 4.4 Q16.4 5.7 15.2 7 L6.6 15.6 Z" fill="#e9dfc3" stroke="#d9d3c2" stroke-width="0.9" stroke-linejoin="round"/><path d="M1.2 15.4 L1.9 10.9 L6 15.2 Z" fill="#fff" stroke="#d9d3c2" stroke-width="0.8" stroke-linejoin="round"/></g></svg>
<span id="t96" class="t" style="left:80.00px;top:171.76px;font-size:16px;font-weight:400;color:#1c1c1c;letter-spacing:0.22px;">10893L60Black</span>
<span id="t97" class="t" style="left:315.70px;top:171.76px;font-size:16px;font-weight:400;color:#1c1c1c;letter-spacing:0.10px;">Lustrzanka Pentos L-60 + ob. 18-55</span>
<div style="left:9.3px;top:203.40px;width:17.5px;height:17.5px;border:1.4px solid #a9a9a9;border-radius:4.5px;background:#fff;"></div>
<svg style="left:47px;top:204px;" width="18" height="18" viewBox="0 0 18 18"><g transform="translate(0.3 0.1)"><path d="M1 15.6 L1.7 10.4 L10 1.8 Q11.3 0.6 12.6 1.8 L15.2 4.4 Q16.4 5.7 15.2 7 L6.6 15.6 Z" fill="#e9dfc3" stroke="#d9d3c2" stroke-width="0.9" stroke-linejoin="round"/><path d="M1.2 15.4 L1.9 10.9 L6 15.2 Z" fill="#fff" stroke="#d9d3c2" stroke-width="0.8" stroke-linejoin="round"/></g></svg>
<span id="t98" class="t" style="left:80.00px;top:203.26px;font-size:16px;font-weight:400;color:#1c1c1c;letter-spacing:0.19px;">1097C001AA</span>
<span id="t99" class="t" style="left:316.70px;top:203.26px;font-size:16px;font-weight:400;color:#1c1c1c;letter-spacing:-0.07px;">Aparat Canion SP B7</span>
<div style="left:9.3px;top:234.90px;width:17.5px;height:17.5px;border:1.4px solid #a9a9a9;border-radius:4.5px;background:#fff;"></div>
<svg style="left:47px;top:235px;" width="18" height="18" viewBox="0 0 18 18"><g transform="translate(0.3 0.6)"><path d="M1 15.6 L1.7 10.4 L10 1.8 Q11.3 0.6 12.6 1.8 L15.2 4.4 Q16.4 5.7 15.2 7 L6.6 15.6 Z" fill="#e9dfc3" stroke="#d9d3c2" stroke-width="0.9" stroke-linejoin="round"/><path d="M1.2 15.4 L1.9 10.9 L6 15.2 Z" fill="#fff" stroke="#d9d3c2" stroke-width="0.8" stroke-linejoin="round"/></g></svg>
<span id="t100" class="t" style="left:80.00px;top:234.76px;font-size:16px;font-weight:400;color:#1c1c1c;letter-spacing:0.33px;">11609N330Black</span>
<span id="t101" class="t" style="left:316.70px;top:234.76px;font-size:16px;font-weight:400;color:#1c1c1c;letter-spacing:0.08px;">Aparat Pentos N-330 + ob. 18-50</span>
<div style="left:9.3px;top:266.40px;width:17.5px;height:17.5px;border:1.4px solid #a9a9a9;border-radius:4.5px;background:#fff;"></div>
<svg style="left:47px;top:267px;" width="18" height="18" viewBox="0 0 18 18"><g transform="translate(0.3 0.1)"><path d="M1 15.6 L1.7 10.4 L10 1.8 Q11.3 0.6 12.6 1.8 L15.2 4.4 Q16.4 5.7 15.2 7 L6.6 15.6 Z" fill="#e9dfc3" stroke="#d9d3c2" stroke-width="0.9" stroke-linejoin="round"/><path d="M1.2 15.4 L1.9 10.9 L6 15.2 Z" fill="#fff" stroke="#d9d3c2" stroke-width="0.8" stroke-linejoin="round"/></g></svg>
<span id="t102" class="t" style="left:80.00px;top:266.26px;font-size:16px;font-weight:400;color:#1c1c1c;letter-spacing:0.19px;">1237C008AA</span>
<span id="t103" class="t" style="left:315.70px;top:266.26px;font-size:16px;font-weight:400;color:#1c1c1c;letter-spacing:0.11px;">Kamera cyfrowa Canion R77</span>
<div style="left:9.3px;top:297.90px;width:17.5px;height:17.5px;border:1.4px solid #a9a9a9;border-radius:4.5px;background:#fff;"></div>
<svg style="left:47px;top:298px;" width="18" height="18" viewBox="0 0 18 18"><g transform="translate(0.3 0.6)"><path d="M1 15.6 L1.7 10.4 L10 1.8 Q11.3 0.6 12.6 1.8 L15.2 4.4 Q16.4 5.7 15.2 7 L6.6 15.6 Z" fill="#e9dfc3" stroke="#d9d3c2" stroke-width="0.9" stroke-linejoin="round"/><path d="M1.2 15.4 L1.9 10.9 L6 15.2 Z" fill="#fff" stroke="#d9d3c2" stroke-width="0.8" stroke-linejoin="round"/></g></svg>
<span id="t104" class="t" style="left:80.00px;top:297.76px;font-size:16px;font-weight:400;color:#1c1c1c;letter-spacing:0.19px;">1263C032AA</span>
<span id="t105" class="t" style="left:315.70px;top:297.76px;font-size:16px;font-weight:400;color:#1c1c1c;letter-spacing:0.06px;">Lustrzanka Canion E100D + ob. 18-55</span>
</div>
<svg style="left:1776px;top:342px;" width="12" height="8" viewBox="0 0 12 8"><path d="M1.2 6.6 L6 1.8 L10.8 6.6" fill="none" stroke="#dcdcdc" stroke-width="1.3"/></svg>
<div style="left:1776.3px;top:354.2px;width:11px;height:25px;background:#e3e3e3;border-radius:5.5px;"></div>
<svg style="left:1776px;top:640px;" width="12" height="9" viewBox="0 0 12 9"><g transform="translate(0 0.5)"><path d="M1.2 1.4 L6 6.2 L10.8 1.4" fill="none" stroke="#e0e0e0" stroke-width="1.3"/></g></svg>
<div style="left:902px;top:652px;width:889.3px;height:2.6px;background:#e2e2e2;"></div>
<div style="left:902px;top:654.6px;width:889.3px;height:47.2px;background:#faf9f8;border-radius:0 0 5px 5px;"></div>
<span id="t106" class="t" style="left:919.00px;top:668.96px;font-size:16px;font-weight:400;color:#444;letter-spacing:0.36px;">Filtruj po:</span>
<span id="t107" class="t" style="left:1002.50px;top:668.96px;font-size:16px;font-weight:400;color:#1f1f1f;letter-spacing:0.30px;">Symbol materiałowy</span>
<svg style="left:1155px;top:674px;" width="12" height="9" viewBox="0 0 12 9"><g transform="translate(0.5 0.3)"><path d="M1.2 1.8 L5.5 6 L9.8 1.8" fill="none" stroke="#333" stroke-width="1.4"/></g></svg>
<div style="left:1511.2px;top:665.3px;width:1.2px;height:26.5px;background:#e1dfdd;"></div>
<span id="t108" class="t" style="left:1558.00px;top:668.96px;font-size:16px;font-weight:400;color:#1c1c1c;letter-spacing:0.09px;">Słownik</span>
<div style="left:1628.7px;top:665.3px;width:1.2px;height:26.5px;background:#e1dfdd;"></div>
<div style="left:1636.3px;top:660px;width:98px;height:36.2px;background:#0a73b5;border-radius:7px;"></div>
<span id="t109" class="t" style="left:1645.30px;top:668.96px;font-size:16px;font-weight:700;color:#fff;letter-spacing:-0.50px;">Wybierz [1]</span>
<div style="left:1740.4px;top:668.3px;width:1.9px;height:20.5px;background:#666;"></div>
<div style="left:12px;top:949px;width:1837px;height:6px;background:#fff;border-radius:9px 9px 0 0;"></div>
<div style="left:52px;top:912px;width:267px;height:43px;background:#fff;border-radius:11px 11px 0 0;"></div>
<div style="left:42px;top:939px;width:10px;height:10px;background:radial-gradient(circle at 0 0,rgba(255,255,255,0) 9.6px,#fff 10.2px);"></div>
<div style="left:319px;top:939px;width:10px;height:10px;background:radial-gradient(circle at 100% 0,rgba(255,255,255,0) 9.6px,#fff 10.2px);"></div>
<span id="t110" class="t" style="left:77.60px;top:920.26px;font-size:16px;font-weight:400;color:#1f1f1f;letter-spacing:0.49px;">Administracja uprawnieniami</span>
<div style="left:262px;top:918px;width:36px;height:24px;background:linear-gradient(90deg,rgba(255,255,255,0) 0,rgba(255,255,255,0.75) 70%,rgba(255,255,255,0.9) 100%);"></div>
<div style="left:73px;top:946px;width:225px;height:3px;background:#0a84d0;"></div>
<div style="left:30.2px;top:922.2px;width:2.8px;height:2.8px;background:#2a2a2a;border-radius:50%;"></div>
<div style="left:30.2px;top:928.5px;width:2.8px;height:2.8px;background:#2a2a2a;border-radius:50%;"></div>
<div style="left:30.2px;top:934.8px;width:2.8px;height:2.8px;background:#2a2a2a;border-radius:50%;"></div>
<svg style="left:176px;top:7px;" width="28" height="28" viewBox="0 0 28 28"><g fill="none" stroke="#fff" stroke-width="1.4" stroke-linejoin="round" stroke-linecap="round"><path d="M12.9 14.4 Q12.9 13.9 13.4 13.7 L25.1 8.95 Q25.6 8.75 25.6 9.3 L25.6 20.1 Q25.6 20.6 25.1 20.8 L13.4 25.3 Q12.9 25.5 12.9 25 Z"/><path d="M19.1 7.4 L19.3 5.6 L7.8 10.7 Q7.3 10.9 7.3 11.5 L7.3 22 Q7.3 22.6 7.9 22.3 L10.4 21"/><path d="M14.8 4.2 L15 2.6 L3.1 7.3 Q2.6 7.5 2.6 8.1 L2.6 18.6 Q2.6 19.2 3.2 19 L4.6 18.4"/></g></svg>
<svg style="left:346px;top:10px;" width="24" height="23" viewBox="0 0 24 23"><g fill="none" stroke="#fff" stroke-width="1.35" stroke-linejoin="miter"><path d="M2.2 10.5 L12 2.1 L21.9 10.5"/><path d="M4.6 8.8 L4.6 20.6 L9.5 20.6 L9.5 16 L14.6 16 L14.6 20.6 L19.5 20.6 L19.5 8.8"/></g></svg>
<svg style="left:393px;top:10px;" width="26" height="22" viewBox="0 0 26 22"><g fill="none" stroke="#fff" stroke-width="1.3"><rect x="4.2" y="1.5" width="20.5" height="19"/><path d="M4.2 3.6 L1.3 3.6 L1.3 20.5 L4.2 20.5"/><rect x="7.7" y="6.4" width="5.8" height="5.4"/><path d="M16.2 6.7 H21.9 M16.2 9.7 H21.9 M16.2 12.7 H21.9 M7.3 15.9 H13.9 M16.2 15.9 H21.9"/></g></svg>
<svg style="left:443px;top:9px;" width="24" height="25" viewBox="0 0 24 25"><path d="M1.6 1.5 H19.6 Q22.6 1.5 22.6 4.5 V23.6 H3.2 Q1.6 23.6 1.6 22 Z" fill="none" stroke="#fff" stroke-width="1.4"/><text x="6.8" y="19.5" font-family="Liberation Sans, sans-serif" font-size="10.4" font-weight="700" fill="#fff" textLength="12.3" lengthAdjust="spacingAndGlyphs">BC</text></svg>
<svg style="left:878px;top:8px;" width="24" height="24" viewBox="0 0 24 24"><g fill="none" stroke="#0b78b3" stroke-width="1.5"><circle cx="10.3" cy="10.4" r="7.7"/><path d="M15.9 16 L21.6 21.8"/></g></svg>
<svg style="left:1570px;top:15px;" width="18" height="13" viewBox="0 0 18 13"><path d="M3.4 4.3 L8.6 9 L13.8 4.3" fill="none" stroke="#fff" stroke-width="2.9"/></svg>
<svg style="left:1607px;top:9px;" width="23" height="23" viewBox="0 0 23 23"><circle cx="11.5" cy="11" r="8.8" fill="none" stroke="#fff" stroke-width="1.35"/><text x="11.5" y="16" text-anchor="middle" font-family="Liberation Sans, sans-serif" font-size="14" fill="#fff">?</text></svg>
<svg style="left:1649px;top:8px;" width="23" height="27" viewBox="0 0 23 27"><g fill="none" stroke="#fff" stroke-width="1.4"><path d="M4.4 20.1 V11.2 Q4.4 4.6 11.1 3.7 Q17.9 4.6 17.9 11.2 V20.1"/><path d="M2.1 20.3 H20.1" stroke-width="1.6"/><path d="M9.1 23.8 H13.1" stroke-width="1.5"/><path d="M10.3 3.9 L11.1 2.2 L11.9 3.9" stroke-width="1.2"/></g></svg>
<div style="left:1698.1px;top:13.3px;width:3px;height:3px;background:#fff;"></div>
<div style="left:1698.1px;top:19.3px;width:3px;height:3px;background:#fff;"></div>
<div style="left:1698.1px;top:25.2px;width:3px;height:3px;background:#fff;"></div>
<div style="left:1755px;top:23.4px;width:13px;height:1.4px;background:#fff;"></div>
<div style="left:1795px;top:13.7px;width:13px;height:12.4px;border:1.4px solid #fff;"></div>
<svg style="left:1835px;top:13px;" width="17" height="16" viewBox="0 0 17 16"><path d="M2.3 2.2 L14.3 14.1 M14.3 2.2 L2.3 14.1" fill="none" stroke="#fff" stroke-width="1.4"/></svg>
<svg style="left:1697px;top:53px;" width="26" height="24" viewBox="0 0 26 24"><g fill="none" stroke="#333" stroke-width="1.3"><path d="M2.6 2.6 V16.5"/><rect x="2.6" y="2.9" width="6" height="3.6" fill="#efefef"/><path d="M8.6 5.4 H21.3" stroke-width="2.6"/><path d="M10.6 5.1 H14 M15.6 5.1 H19.4" stroke="#efefef" stroke-width="0.8"/><path d="M8.1 11.4 H23 M8.1 14.6 H23 M8.1 17.8 H23 M8.1 20.8 H23" stroke-width="1.35"/></g></svg>
<svg style="left:1750px;top:49px;" width="26" height="26" viewBox="0 0 26 26"><g fill="none" stroke="#0f7ab8" stroke-width="1.4" stroke-linejoin="miter"><path d="M8.2 8 H4 V23.3 H20.4 V14.8"/><path d="M6.3 18.6 Q7.4 10.1 14.9 9.4 V3.6 L22.4 10 L14.9 16.3 V12.4 Q9 12.4 6.3 18.6 Z" stroke-linejoin="round"/></g></svg>
<svg style="left:1803px;top:48px;" width="32" height="30" viewBox="0 0 32 30"><g fill="none" stroke="#1490d8" stroke-width="1.55" stroke-linecap="round"><path d="M12.9 22.1 A7.7 7.7 0 1 1 20.2 21.6 Q17.6 23 16.7 26"/><path d="M15.9 2.9 V5.6 M3.3 15.6 H5.6 M26.4 15.6 H28.7 M5.8 6.9 L7.9 8.6 M26 6.9 L23.9 8.6"/></g></svg>
<svg style="left:28px;top:98px;" width="26" height="28" viewBox="0 0 26 28"><g fill="none" stroke="#333" stroke-width="1.35"><path d="M6.9 24.2 H2.4 V2.4 H12.9 L19 8.5 V9.6"/><path d="M12.9 2.4 V8.5 H19"/><path d="M15.7 24.2 H19.4 V21"/></g><path d="M9.5 25 L10.2 21.8 L21.2 10.4 Q22.4 9.4 23.4 10.3 L23.9 10.8 Q24.7 11.8 23.7 12.8 L12.6 24.2 Z" fill="#fff" stroke="#2b8fd9" stroke-width="1.15" stroke-linejoin="round"/><path d="M11.6 22.8 L22.3 11.7" stroke="#2b8fd9" stroke-width="0.9" fill="none"/><path d="M9.3 25.2 L10.1 22.6 L11.9 24.4 Z" fill="#2b8fd9"/></svg>
<svg style="left:120px;top:98px;" width="28" height="28" viewBox="0 0 28 28"><g fill="#fff" stroke="#3a3a3a" stroke-width="1.45"><rect x="7.3" y="2.4" width="13.5" height="7.7"/><rect x="2.5" y="10.1" width="23" height="10.5"/><rect x="7.1" y="16.1" width="13.9" height="9.3"/></g><path d="M9.6 19.8 H18.5 M9.6 22.2 H18.5" stroke="#8a8a8a" stroke-width="1.1"/><path d="M5.1 12.9 H8" stroke="#2b8fd9" stroke-width="1.3"/></svg>
<svg style="left:156px;top:106px;" width="14" height="11" viewBox="0 0 14 11"><path d="M2.4 3.7 L7 8.3 L11.8 3.7" fill="none" stroke="#222" stroke-width="1.5"/></svg>
<svg style="left:250px;top:99px;" width="26" height="24" viewBox="0 0 26 24"><rect x="7.3" y="1.5" width="17" height="21" rx="1.4" fill="#fff"/><path d="M7.3 4.7 V2.9 Q7.3 1.5 8.7 1.5 H24.3 V22.5 H8.7 Q7.3 22.5 7.3 21.1 V20" fill="none" stroke="#484848" stroke-width="1.1"/><path d="M23.95 1.2 V22.8" stroke="#444" stroke-width="1.7"/><path d="M1.2 12.6 H11.0" stroke="#45ad82" stroke-width="2.5" fill="none"/><path d="M4.9 7.5 L11.0 12.6 L4.9 17.7" stroke="#45ad82" stroke-width="3" fill="none" stroke-linejoin="miter"/></svg>
<svg style="left:410px;top:99px;" width="27" height="24" viewBox="0 0 27 24"><rect x="1.7" y="1.5" width="16.9" height="21" rx="1.4" fill="#fff"/><path d="M18.2 1.5 H3.1 Q1.7 1.5 1.7 2.9 V21.1 Q1.7 22.5 3.1 22.5 H18.2" fill="none" stroke="#484848" stroke-width="1.15"/><path d="M18.2 1.1 V4.7 M18.2 20 V22.9" stroke="#444" stroke-width="1.7"/><path d="M11 12.6 H20.8" stroke="#8c4fb0" stroke-width="2.5" fill="none"/><path d="M14.7 7.5 L20.8 12.6 L14.7 17.7" stroke="#8c4fb0" stroke-width="3" fill="none" stroke-linejoin="miter"/></svg>
<svg style="left:1617px;top:98px;" width="26" height="28" viewBox="0 0 26 28"><g fill="none" stroke="#0f78b8" stroke-width="1.5" stroke-linejoin="round" stroke-linecap="round"><path d="M10 14.3 L23.8 7 V19 L10 25.4 Z"/><path d="M16.7 4.7 V2.3 L3.4 8.9 V21.6 L6.9 20"/></g></svg>
<svg style="left:1694px;top:98px;" width="28" height="28" viewBox="0 0 28 28"><rect x="2.6" y="11.6" width="5.6" height="13.6" fill="#b6dfc0" stroke="#0ea04b" stroke-width="1.4"/><rect x="11.5" y="2.9" width="5.4" height="22.3" fill="#fbe08a" stroke="#f07a28" stroke-width="1.4"/><rect x="19.8" y="7.8" width="5.5" height="17.4" fill="#f5b7b7" stroke="#e8302a" stroke-width="1.4"/></svg>
<svg style="left:1726px;top:106px;" width="14" height="11" viewBox="0 0 14 11"><path d="M2.4 3.4 L7 8.4 L11.8 3.4" fill="none" stroke="#222" stroke-width="1.5"/></svg>
<svg style="left:1757px;top:98px;" width="26" height="28" viewBox="0 0 26 28"><path d="M3 2.7 H21.8 Q22.9 2.7 22.3 3.7 L15.2 14.2 V25.2 H9.8 V14.2 L2.5 3.7 Q1.9 2.7 3 2.7 Z" fill="none" stroke="#333" stroke-width="1.4" stroke-linejoin="round"/></svg>
<svg style="left:1477px;top:664px;" width="26" height="28" viewBox="0 0 26 28"><path d="M9.6 24 H1.5 V2.7 H12.6 L19.1 8.5 V10.8" fill="none" stroke="#333" stroke-width="1.4"/><path d="M12.6 2.7 V8.3 H19.1" fill="none" stroke="#333" stroke-width="1.4"/><circle cx="17.1" cy="19.2" r="5.7" fill="#faf9f8" stroke="#16a84a" stroke-width="1.5"/><path d="M13.5 19.2 H20.7 M17.1 15.6 V22.8" stroke="#16a84a" stroke-width="1.5" fill="none"/></svg>
<svg style="left:1527px;top:664px;" width="27" height="28" viewBox="0 0 27 28"><g transform="translate(0.9 0)"><path d="M9.6 24 H1.5 V2.7 H12.6 L19.1 8.5 V10.8" fill="none" stroke="#333" stroke-width="1.4"/><path d="M12.6 2.7 V8.3 H19.1" fill="none" stroke="#333" stroke-width="1.4"/><circle cx="17.1" cy="19.2" r="5.7" fill="#faf9f8" stroke="#a040a8" stroke-width="1.5"/><path d="M17.1 18 V22.9" stroke="#a040a8" stroke-width="1.5" fill="none"/><circle cx="17.1" cy="16.1" r="0.95" fill="#a040a8"/></g></svg>
<svg style="left:1750px;top:665px;" width="27" height="26" viewBox="0 0 27 26"><g transform="translate(0 0.4)"><g transform="rotate(-45 13 11)"><rect x="1.2" y="6.2" width="23" height="9.6" rx="1.6" fill="#fff" stroke="#666" stroke-width="1.2"/><path d="M2.8 6.2 H8.4 V15.8 H2.8 Q1.2 15.8 1.2 14.2 V7.8 Q1.2 6.2 2.8 6.2 Z" fill="#e2725b" stroke="#d65a42" stroke-width="1.2"/></g><path d="M1.2 23.2 H12.8 M15 23.2 H18.8 M20.6 23.2 H25" stroke="#8a8a8a" stroke-width="1.3" fill="none"/></g></svg>
<div style="left:1px;top:40px;width:1.1px;height:909px;background:#fff;"></div>
</div>
</body></html>
